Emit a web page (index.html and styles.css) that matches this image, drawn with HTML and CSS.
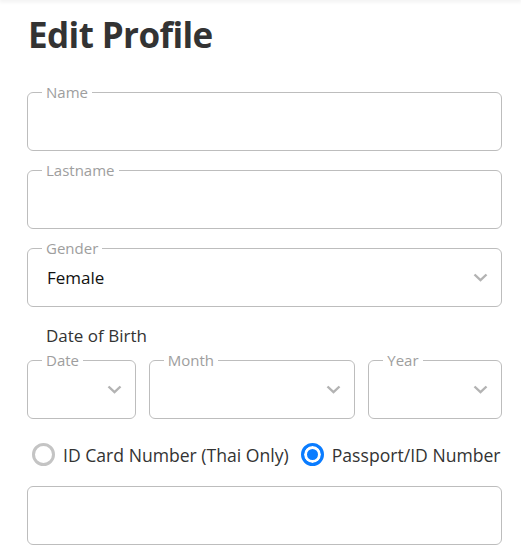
FILE: index.html
```html
<!DOCTYPE html>
<html lang="en">
<head>
  <meta charset="UTF-8" />
  <meta name="viewport" content="width=device-width, initial-scale=1.0" />
  <title>Edit Profile</title>
  <link rel="stylesheet" href="styles.css">
</head>
<body>
  <div class="topbar"></div>
  <div class="container">
    <h1>Edit Profile</h1>

    <fieldset class="field">
      <legend>Name</legend>
      <input type="text" id="name" />
    </fieldset>

    <fieldset class="field">
      <legend>Lastname</legend>
      <input type="text" id="lastname" />
    </fieldset>

    <fieldset class="field">
      <legend>Gender</legend>
      <div class="select">
        <span class="value">Female</span>
        <svg class="chev" width="15" height="9" viewBox="0 0 15 9"><path d="M1.5 1.5 L7.5 7.2 L13.5 1.5" fill="none" stroke="#b3b3b3" stroke-width="2.4"/></svg>
      </div>
    </fieldset>

    <div class="dob-label">Date of Birth</div>
    <div class="dob-row">
      <fieldset class="field">
        <legend>Date</legend>
        <div class="select">
          <span class="value"></span>
          <svg class="chev" width="15" height="9" viewBox="0 0 15 9"><path d="M1.5 1.5 L7.5 7.2 L13.5 1.5" fill="none" stroke="#b3b3b3" stroke-width="2.4"/></svg>
        </div>
      </fieldset>
      <fieldset class="field">
        <legend>Month</legend>
        <div class="select">
          <span class="value"></span>
          <svg class="chev" width="15" height="9" viewBox="0 0 15 9"><path d="M1.5 1.5 L7.5 7.2 L13.5 1.5" fill="none" stroke="#b3b3b3" stroke-width="2.4"/></svg>
        </div>
      </fieldset>
      <fieldset class="field">
        <legend>Year</legend>
        <div class="select">
          <span class="value"></span>
          <svg class="chev" width="15" height="9" viewBox="0 0 15 9"><path d="M1.5 1.5 L7.5 7.2 L13.5 1.5" fill="none" stroke="#b3b3b3" stroke-width="2.4"/></svg>
        </div>
      </fieldset>
    </div>

    <div class="radios">
      <label class="radio"><span class="dot"></span>ID Card Number (Thai Only)</label>
      <label class="radio checked"><span class="dot"></span>Passport/ID Number</label>
    </div>

    <div class="plain-box"></div>
  </div>
</body>
</html>
```

FILE: styles.css
```css
body {
  margin: 0;
  background: #fff;
  font-family: "Open Sans", "Noto Sans", sans-serif;
  color: #333;
}
.topbar {
  height: 0;
  box-shadow: 0 0 4px 1px rgba(0, 0, 0, 0.12);
}
.container {
  padding: 0 19px 0 27px;
}
h1 {
  margin: 0;
  padding: 12px 0 0 1px;
  font-size: 35px;
  line-height: 46px;
  font-weight: 700;
  letter-spacing: -0.6px;
  color: #333;
  margin-bottom: 24px;
}
.field {
  margin: 0 0 9px;
  padding: 0 14px 10px 14px;
  border: 1px solid #bdbdbd;
  border-radius: 6px;
  min-width: 0;
}
.field legend {
  padding: 0 4px;
  font-size: 15px;
  line-height: 20px;
  color: #9e9e9e;
}
.field input {
  display: block;
  width: 100%;
  height: 38px;
  border: none;
  outline: none;
  padding: 0;
  font: inherit;
  box-sizing: border-box;
}
.select {
  display: flex;
  align-items: center;
  justify-content: space-between;
  height: 38px;
  padding-left: 5px;
}
.select .value {
  font-size: 17px;
  color: #111;
}
.chev {
  display: block;
  margin-right: -1px;
}
.dob-label {
  margin: 18px 0 3px;
  padding-left: 19px;
  font-size: 17px;
  line-height: 22px;
  color: #333;
}
.dob-row {
  display: grid;
  grid-template-columns: 109fr 207fr 134fr;
  gap: 13px;
}
.radios {
  display: flex;
  align-items: center;
  margin: 15px 0 20px 5px;
  gap: 12px;
}
.radio {
  display: flex;
  align-items: center;
  gap: 8px;
  font-size: 17.6px;
  line-height: 22px;
  color: #333;
}
.dot {
  width: 23px;
  height: 23px;
  box-sizing: border-box;
  border: 3px solid #c4c4c4;
  border-radius: 50%;
  background: #fff;
}
.radio.checked .dot {
  border-color: #0a7cff;
  box-shadow: inset 0 0 0 3px #fff;
  background: #0a7cff;
}
.plain-box {
  height: 59px;
  box-sizing: border-box;
  border: 1px solid #bdbdbd;
  border-radius: 6px;
}
```
